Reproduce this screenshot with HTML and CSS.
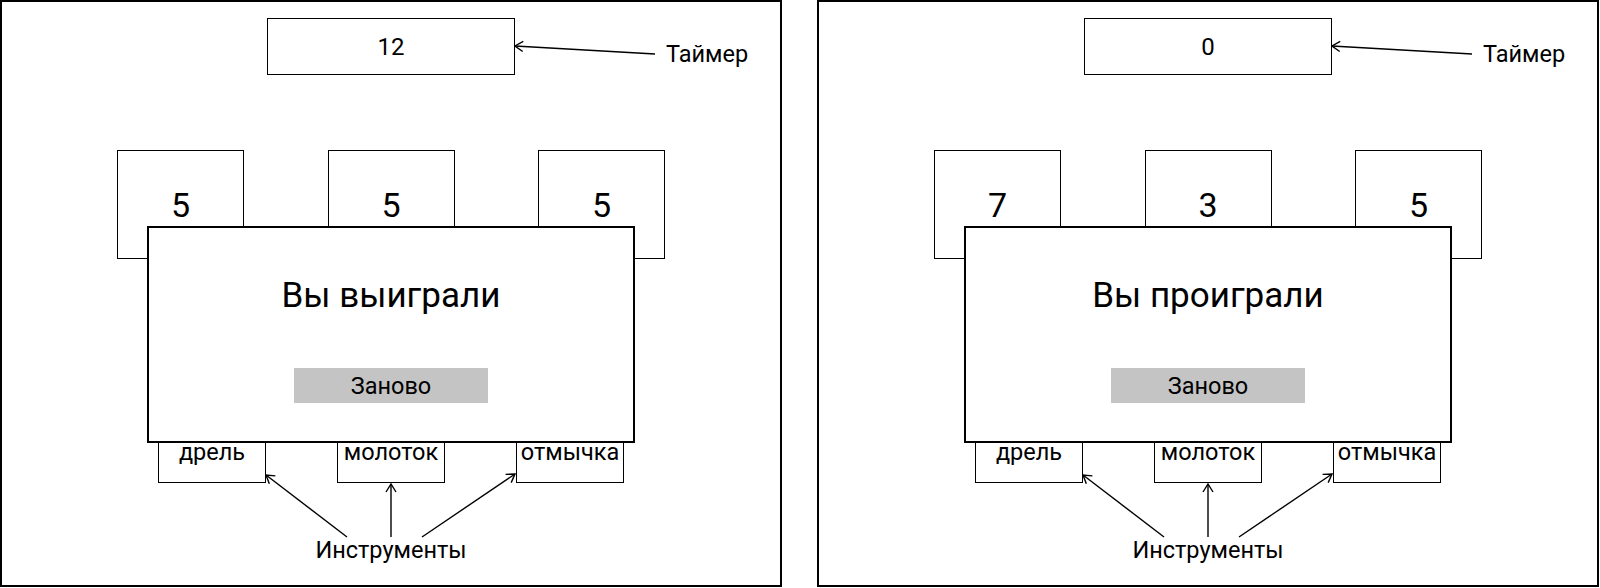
FILE: index.html
```html
<!DOCTYPE html>
<html lang="ru">
<head>
  <meta charset="UTF-8">
  <meta name="viewport" content="width=device-width, initial-scale=1.0">
  <title>Сейф — экраны результата</title>
  <link rel="stylesheet" href="styles.css">
</head>
<body>
  <!-- shared arrow head for the callouts -->
  <svg class="defs" width="0" height="0" aria-hidden="true">
    <defs>
      <marker id="head" markerWidth="12" markerHeight="12" refX="1" refY="6" orient="auto" markerUnits="userSpaceOnUse">
        <path d="M9,1 L1,6 L9,11" fill="none" stroke="#000" stroke-width="1.4"/>
      </marker>
    </defs>
  </svg>

  <div class="screens">
    <!-- Win screen -->
    <section class="screen">
      <div class="timer-row">
        <div class="timer">12</div>
        <span class="note note-timer">Таймер</span>
      </div>
      <div class="cards">
        <div class="card">5</div>
        <div class="card">5</div>
        <div class="card">5</div>
      </div>
      <div class="tools">
        <div class="tool">дрель</div>
        <div class="tool">молоток</div>
        <div class="tool">отмычка</div>
      </div>
      <div class="note note-tools">Инструменты</div>

      <div class="result">
        <h2>Вы выиграли</h2>
        <button class="again">Заново</button>
      </div>

      <svg class="arrows" width="782" height="587">
        <line x1="515" y1="46" x2="655" y2="54" marker-start="url(#head)"/>
        <line x1="266" y1="475" x2="347" y2="537" marker-start="url(#head)"/>
        <line x1="391" y1="484" x2="391" y2="537" marker-start="url(#head)"/>
        <line x1="515" y1="474" x2="422" y2="537" marker-start="url(#head)"/>
      </svg>
    </section>

    <!-- Lose screen -->
    <section class="screen">
      <div class="timer-row">
        <div class="timer">0</div>
        <span class="note note-timer">Таймер</span>
      </div>
      <div class="cards">
        <div class="card">7</div>
        <div class="card">3</div>
        <div class="card">5</div>
      </div>
      <div class="tools">
        <div class="tool">дрель</div>
        <div class="tool">молоток</div>
        <div class="tool">отмычка</div>
      </div>
      <div class="note note-tools">Инструменты</div>

      <div class="result">
        <h2>Вы проиграли</h2>
        <button class="again">Заново</button>
      </div>

      <svg class="arrows" width="782" height="587">
        <line x1="515" y1="46" x2="655" y2="54" marker-start="url(#head)"/>
        <line x1="266" y1="475" x2="347" y2="537" marker-start="url(#head)"/>
        <line x1="391" y1="484" x2="391" y2="537" marker-start="url(#head)"/>
        <line x1="515" y1="474" x2="422" y2="537" marker-start="url(#head)"/>
      </svg>
    </section>
  </div>
</body>
</html>
```

FILE: styles.css
```css
body {
  margin: 0;
  background-color: white;
  font-family: Roboto, "Noto Sans", Arial, sans-serif;
  color: #000;
}
.defs {
  position: absolute;
}
.screens {
  display: flex;
  gap: 35px;
}
.screen {
  position: relative;
  box-sizing: border-box;
  width: 782px;
  height: 587px;
  padding-top: 16px;
  border: 2px solid #000;
  display: flex;
  flex-direction: column;
  align-items: center;
}
.timer-row {
  position: relative;
}
.timer {
  box-sizing: border-box;
  width: 248px;
  height: 57px;
  border: 1px solid #000;
  display: flex;
  align-items: center;
  justify-content: center;
  font-size: 24px;
}
.note {
  font-size: 23.5px;
  line-height: 28px;
  white-space: nowrap;
}
.note-timer {
  position: absolute;
  left: calc(100% + 151px);
  top: 22px;
}
.cards {
  display: flex;
  gap: 83.5px;
  margin-top: 75px;
}
.card {
  box-sizing: border-box;
  width: 127px;
  height: 109px;
  border: 1px solid #000;
  display: flex;
  align-items: center;
  justify-content: center;
  font-size: 34px;
}
.tools {
  display: flex;
  gap: 71.5px;
  margin-top: 178px;
}
.tool {
  box-sizing: border-box;
  width: 107.5px;
  height: 46px;
  border: 1.5px solid #000;
  text-align: center;
  font-size: 23.5px;
  line-height: 28px;
}
.note-tools {
  margin-top: 53px;
}
.result {
  position: absolute;
  left: 145px;
  top: 223.5px;
  box-sizing: border-box;
  width: 488px;
  height: 217.5px;
  padding-top: 48px;
  background-color: white;
  border: 2px solid #000;
  display: flex;
  flex-direction: column;
  align-items: center;
}
.result h2 {
  margin: 0;
  font-size: 35px;
  font-weight: normal;
  line-height: 40px;
}
.again {
  width: 194px;
  height: 35px;
  margin-top: 52.5px;
  padding: 0;
  border: none;
  background-color: #c4c4c4;
  font-family: inherit;
  font-size: 23.5px;
  color: #000;
}
.arrows {
  position: absolute;
  left: -2px;
  top: -2px;
  pointer-events: none;
}
.arrows line {
  stroke: #000;
  stroke-width: 1.4;
}
```
